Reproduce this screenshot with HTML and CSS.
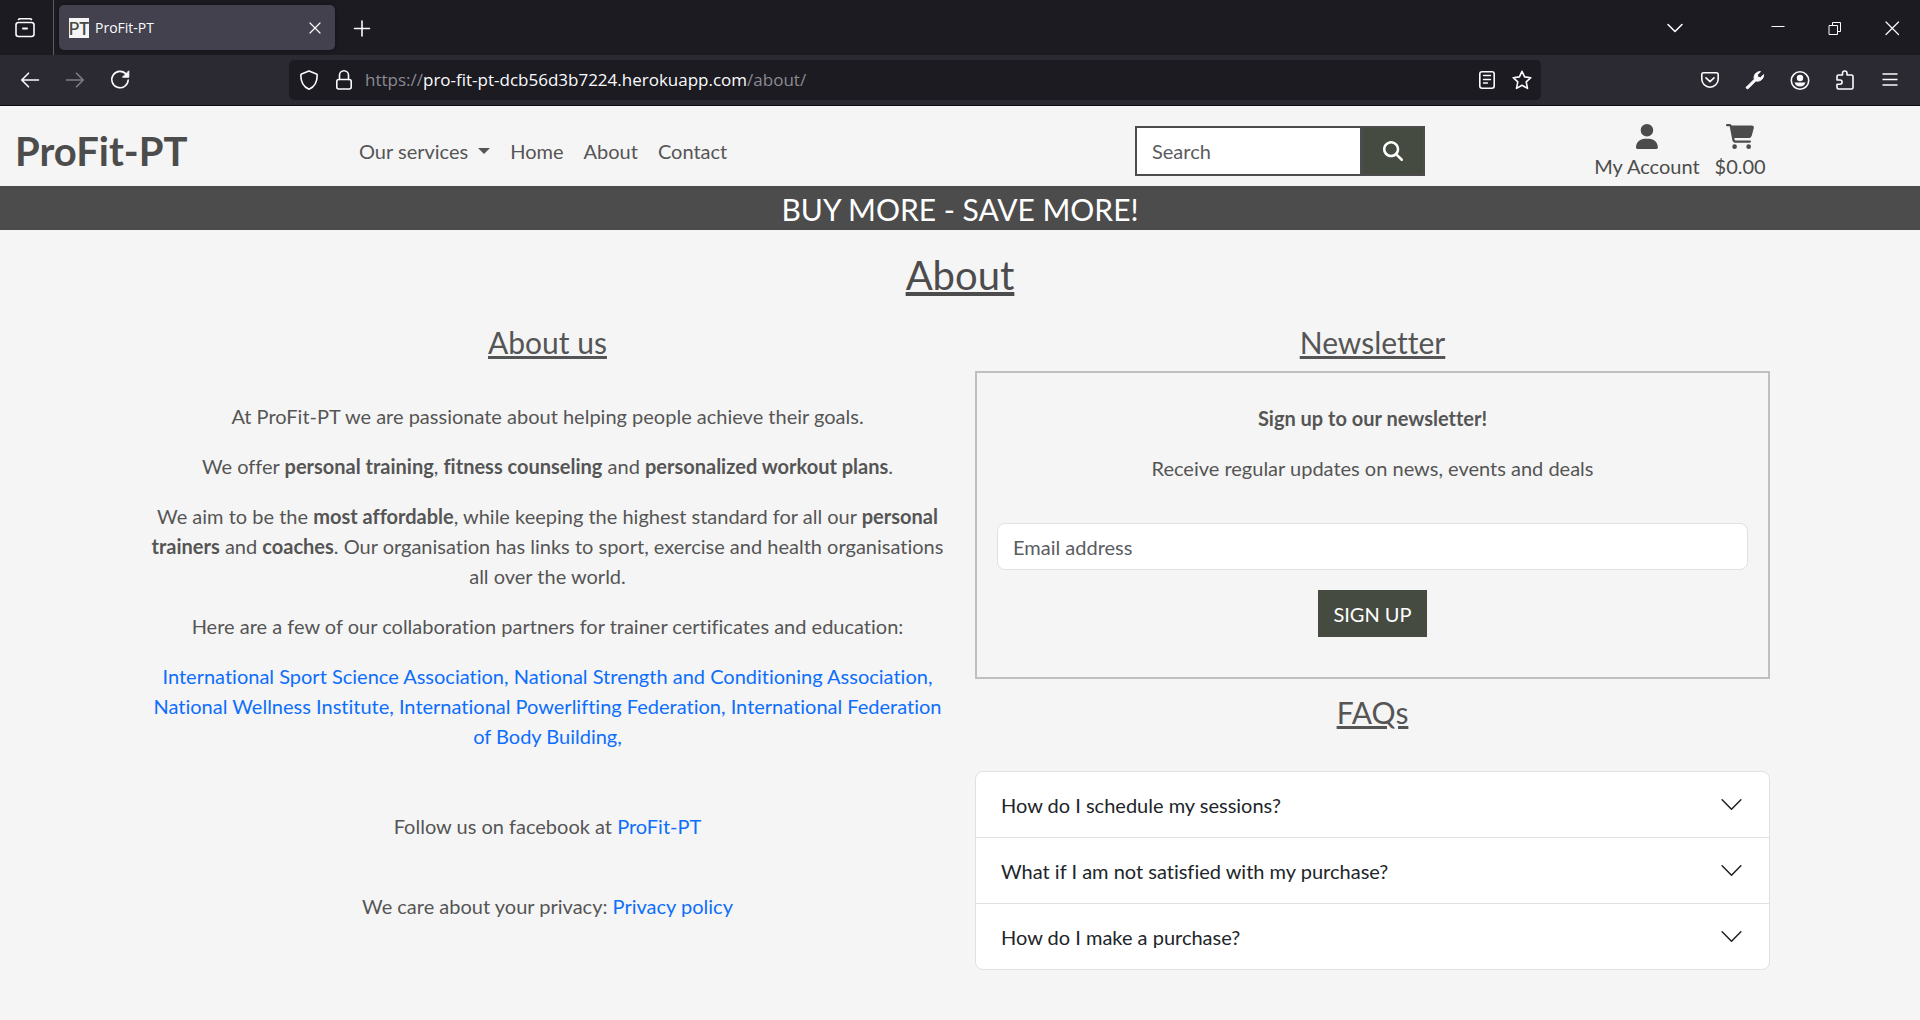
FILE: index.html
```html
<!DOCTYPE html>
<html lang="en">
<head>
<meta charset="utf-8">
<meta name="viewport" content="width=device-width, initial-scale=1">
<title>ProFit-PT</title>
<link rel="stylesheet" href="styles.css">
</head>
<body>
<div class="browser">
  <div class="tabs">
    <button class="view-button" type="button" aria-label="Firefox View">
      <svg class="icon" viewBox="0 0 20 20"><path d="M3.500 1.500Q4 .8 5 .8h10q1 0 1.500.7"/><rect x="1" y="4.500" width="18" height="14" rx="2.500"/><path d="M8 10.500h4" stroke-width="2"/></svg>
    </button>
    <div class="tab">
      <span class="favicon">PT</span>
      <span class="tab-title">ProFit-PT</span>
      <button class="tab-close" type="button" aria-label="Close tab">
        <svg class="icon thin" viewBox="0 0 20 20"><path d="M5 5l10 10M15 5L5 15"/></svg>
      </button>
    </div>
    <button class="tool" type="button" aria-label="New tab">
      <svg class="icon" viewBox="0 0 20 20"><path d="M10 3v15M2.500 10.500h15"/></svg>
    </button>
    <button class="tool list-tabs" type="button" aria-label="List all tabs">
      <svg class="icon" viewBox="0 0 20 20"><path d="M3 6.500l7 7 7-7"/></svg>
    </button>
    <button class="window-button" type="button" aria-label="Minimize">
      <svg class="icon crisp" viewBox="0 0 20 20"><path d="M4 8.500h12"/></svg>
    </button>
    <button class="window-button" type="button" aria-label="Restore">
      <svg class="icon crisp" viewBox="0 0 20 20"><path d="M4.500 7.500h8v9h-8zM7.500 7.500v-3h8v9h-3"/></svg>
    </button>
    <button class="window-button" type="button" aria-label="Close window">
      <svg class="icon thin" viewBox="0 0 20 20"><path d="M4 4l12.500 12.500M16.500 4L4 16.500"/></svg>
    </button>
  </div>
  <div class="toolbar">
    <button class="tool" type="button" aria-label="Back">
      <svg class="icon" viewBox="0 0 20 20"><path d="M18.500 10H2M8.500 3.200L1.800 10l6.700 6.800"/></svg>
    </button>
    <button class="tool" type="button" aria-label="Forward" disabled>
      <svg class="icon" viewBox="0 0 20 20"><path d="M1.500 10H18M11.500 3.200l6.700 6.800-6.700 6.800"/></svg>
    </button>
    <button class="tool" type="button" aria-label="Reload">
      <svg class="icon" viewBox="0 0 20 20"><path d="M16.200 4.200A8.200 8.200 0 1 0 18.200 10"/><path class="solid" d="M18.800 1.200v6h-6z" stroke-width="1"/></svg>
    </button>
    <div class="url-bar">
      <button class="url-tool" type="button" aria-label="Tracking protection">
        <svg class="icon" viewBox="0 0 20 20"><path d="M10 .9l7.500 3Q18.200 4.200 18.200 5C18.200 12 15.500 17 10 19.200 4.500 17 1.800 12 1.800 5q0-.8.700-1.100z"/></svg>
      </button>
      <button class="url-tool" type="button" aria-label="Site information">
        <svg class="icon" viewBox="0 0 20 20"><rect x="2.800" y="9.500" width="14.400" height="9.500" rx="2"/><path d="M5.500 9.500V5.300a4.500 4.500 0 0 1 9 0v4.200"/></svg>
      </button>
      <div class="url"><span class="url-dim">https://</span>pro-fit-pt-dcb56d3b7224.herokuapp.com<span class="url-dim">/about/</span></div>
      <button class="url-tool" type="button" aria-label="Reader view">
        <svg class="icon" viewBox="0 0 20 20"><rect x="2.800" y="1.800" width="14.400" height="16.400" rx="2.200"/><path d="M6.500 5.500h7M6.500 9.500h7M6.500 13h4" stroke-width="1.400"/></svg>
      </button>
      <button class="url-tool" type="button" aria-label="Bookmark this page">
        <svg class="icon" viewBox="0 0 20 20"><path d="M10 1.300l2.600 5.600 6.200.8-4.600 4.200 1.300 6.500-5.500-3.200-5.500 3.200 1.300-6.500L1.200 7.700l6.200-.8z"/></svg>
      </button>
    </div>
    <button class="tool" type="button" aria-label="Save to Pocket">
      <svg class="icon" viewBox="0 0 20 20"><path d="M3.500 2.800h13q1.700 0 1.700 1.700V9a8.200 8.200 0 0 1-16.400 0V4.500q0-1.700 1.700-1.700z"/><path d="M6 7.800l4 3.800 4-3.800"/></svg>
    </button>
    <button class="tool" type="button" aria-label="Developer tools">
      <svg class="icon" viewBox="0 0 20 20"><path class="solid" stroke-width="1" d="M1.600 16.900l7.700-7.700C8.300 5.500 10.900 1.500 15.500 1.600l-3 3.100.4 2.600 2.600.4 3.100-3.100c.2 4.600-3.800 7.400-7.700 6.300l-7.700 7.600q-1 .6-1.600-.1-.6-.7 0-1.500z"/></svg>
    </button>
    <button class="tool" type="button" aria-label="Account">
      <svg class="icon" viewBox="0 0 20 20"><circle cx="10" cy="10.500" r="8.700"/><circle class="solid" cx="10" cy="8" r="3.200" stroke-width="0"/><path class="solid" stroke-width="0" d="M4.500 12.500h11q-1.200 4-5.500 4t-5.500-4z"/></svg>
    </button>
    <button class="tool" type="button" aria-label="Extensions">
      <svg class="icon" viewBox="0 0 20 20"><path d="M2 8.200V6.500Q2 5 3.500 5h4V3.200a2.200 2.200 0 0 1 4.500 0V5h4.500Q18 5 18 6.500v11q0 1.500-1.500 1.500h-13Q2 19 2 17.500v-3.300h3a2 2 0 0 0 0-4.200H2z"/></svg>
    </button>
    <button class="tool" type="button" aria-label="Menu">
      <svg class="icon" viewBox="0 0 20 20"><path d="M2.500 4h15M2.500 9.500h15M2.500 15h15" stroke-linecap="butt"/></svg>
    </button>
  </div>
</div>

<header class="site-header">
  <a class="brand" href="#">ProFit-PT</a>
  <nav class="nav" aria-label="Main">
    <button class="nav-link dropdown" type="button">Our services</button>
    <a class="nav-link" href="#">Home</a>
    <a class="nav-link" href="#">About</a>
    <a class="nav-link" href="#">Contact</a>
  </nav>
  <form class="search">
    <input class="search-input" type="text" placeholder="Search" aria-label="Search">
    <button class="search-button" type="button" aria-label="Submit search">
      <svg class="search-icon" viewBox="0 0 512 512"><path d="M416 208c0 45.900-14.900 88.300-40 122.700L502.600 457.400c12.500 12.500 12.500 32.800 0 45.300s-32.800 12.500-45.300 0L330.700 376c-34.400 25.200-76.800 40-122.700 40C93.100 416 0 322.900 0 208S93.100 0 208 0S416 93.100 416 208zM208 352a144 144 0 1 0 0-288 144 144 0 1 0 0 288z"/></svg>
    </button>
  </form>
  <div class="user-links">
    <a class="user-link" href="#">
      <svg class="user-icon" viewBox="0 0 448 512"><path d="M224 256A128 128 0 1 0 224 0a128 128 0 1 0 0 256zm-45.700 48C79.800 304 0 383.800 0 482.300C0 498.700 13.300 512 29.700 512H418.300c16.400 0 29.700-13.300 29.700-29.700C448 383.800 368.200 304 269.700 304H178.300z"/></svg>
      <span>My Account</span>
    </a>
    <a class="user-link" href="#">
      <svg class="user-icon" viewBox="0 0 576 512"><path d="M0 24C0 10.700 10.700 0 24 0H69.500c22 0 41.500 12.800 50.600 32h411c26.300 0 45.500 25 38.600 50.400l-41 152.300c-8.500 31.400-37 53.300-69.500 53.300H170.700l5.400 28.500c2.200 11.300 12.100 19.500 23.600 19.500H488c13.300 0 24 10.700 24 24s-10.700 24-24 24H199.700c-34.600 0-64.300-24.600-70.700-58.500L77.400 54.500c-.7-3.800-4-6.500-7.900-6.500H24C10.700 48 0 37.300 0 24zM128 464a48 48 0 1 1 96 0 48 48 0 1 1 -96 0zm336-48a48 48 0 1 1 0 96 48 48 0 1 1 0-96z"/></svg>
      <span>$0.00</span>
    </a>
  </div>
</header>

<div class="banner">BUY MORE - SAVE MORE!</div>

<main class="container">
  <h1 class="page-title">About</h1>
  <div class="columns">
    <section class="about">
      <h2 class="section-title">About us</h2>
      <div class="about-text">
        <p>At ProFit-PT we are passionate about helping people achieve their goals.</p>
        <p>We offer <strong>personal training</strong>, <strong>fitness counseling</strong> and <strong>personalized workout plans</strong>.</p>
        <p>We aim to be the <strong>most affordable</strong>, while keeping the highest standard for all our <strong>personal trainers</strong> and <strong>coaches</strong>. Our organisation has links to sport, exercise and health organisations all over the world.</p>
        <p>Here are a few of our collaboration partners for trainer certificates and education:</p>
        <p><a href="#">International Sport Science Association,</a> <a href="#">National Strength and Conditioning Association,</a> <a href="#">National Wellness Institute,</a> <a href="#">International Powerlifting Federation,</a> <a href="#">International Federation of Body Building,</a></p>
      </div>
      <p class="follow">Follow us on facebook at <a href="#">ProFit-PT</a></p>
      <p class="privacy">We care about your privacy: <a href="#">Privacy policy</a></p>
    </section>
    <section class="side">
      <h2 class="section-title">Newsletter</h2>
      <form class="newsletter">
        <p><strong>Sign up to our newsletter!</strong></p>
        <p>Receive regular updates on news, events and deals</p>
        <input class="email" type="email" placeholder="Email address" aria-label="Email address">
        <button class="sign-up" type="button">SIGN UP</button>
      </form>
      <h2 class="section-title faq-title">FAQs</h2>
      <div class="accordion">
        <button class="question" type="button">How do I schedule my sessions?
          <svg class="chevron" viewBox="0 0 16 16"><path d="M2 5l6 6 6-6"/></svg>
        </button>
        <button class="question" type="button">What if I am not satisfied with my purchase?
          <svg class="chevron" viewBox="0 0 16 16"><path d="M2 5l6 6 6-6"/></svg>
        </button>
        <button class="question" type="button">How do I make a purchase?
          <svg class="chevron" viewBox="0 0 16 16"><path d="M2 5l6 6 6-6"/></svg>
        </button>
      </div>
    </section>
  </div>
</main>
</body>
</html>
```
FILE: styles.css
```css
*,
*::before,
*::after {
  box-sizing: border-box;
}

body {
  margin: 0;
  background: #f5f5f5;
  color: #555;
  font-family: Lato, sans-serif;
  font-size: 20px;
  font-variant-ligatures: none;
  line-height: 30px;
}

button,
input {
  margin: 0;
  font: inherit;
}

button {
  padding: 0;
  border: 0;
  background: none;
  color: inherit;
  cursor: pointer;
}

a {
  color: #0d6efd;
  text-decoration: none;
}

p {
  margin: 0 0 20px;
}

/* Browser window */

.browser {
  background: #2b2a33;
  border-bottom: 1px solid #0c0c0d;
  color: #fbfbfe;
  font-family: "Open Sans", "Noto Sans", sans-serif;
}

.icon {
  display: block;
  width: 20px;
  height: 20px;
  fill: none;
  stroke: currentColor;
  stroke-width: 1.6;
  stroke-linecap: round;
  stroke-linejoin: round;
}

.icon.thin,
.icon.crisp {
  stroke-width: 1.2;
}

.icon.crisp {
  stroke-width: 1;
  stroke-linecap: square;
  stroke-linejoin: miter;
}

.solid {
  fill: currentColor;
}

.tabs {
  display: flex;
  align-items: center;
  height: 55px;
  background: #1c1b22;
}

.view-button {
  display: flex;
  align-items: center;
  align-self: stretch;
  padding: 0 18px 0 15px;
  border-right: 1px solid #5b5b66;
}

.tab {
  display: flex;
  align-items: center;
  width: 276px;
  height: 45px;
  margin: 0 4px 0 5px;
  padding: 0 10px;
  border-radius: 5px;
  background: #42414d;
  box-shadow: 0 0 4px rgba(0, 0, 0, 0.4);
}

.favicon {
  display: flex;
  align-items: center;
  justify-content: center;
  width: 20px;
  height: 20px;
  background: #f5f5f5;
  color: #454b40;
  font: 500 17px/20px "Noto Sans CJK SC", sans-serif;
}

.tab-title {
  flex: 1;
  margin-left: 6px;
  font-size: 14px;
}

.tool {
  display: flex;
  align-items: center;
  justify-content: center;
  width: 45px;
  height: 40px;
}

.tool:disabled {
  opacity: 0.4;
}

.list-tabs {
  margin: 0 52px 0 auto;
}

.window-button {
  display: flex;
  align-items: center;
  justify-content: center;
  width: 57px;
  height: 55px;
}

.toolbar {
  display: flex;
  align-items: center;
  height: 50px;
  padding: 0 8px 0 7px;
}

.url-bar {
  display: flex;
  flex: 1;
  align-items: center;
  height: 40px;
  margin: 0 146px 0 147px;
  padding: 0 2px;
  border-radius: 5px;
  background: #1c1b22;
}

.url-tool {
  display: flex;
  align-items: center;
  justify-content: center;
  width: 35px;
  height: 35px;
}

.url {
  flex: 1;
  margin-left: 4px;
  font-size: 17px;
  white-space: nowrap;
}

.url-dim {
  color: #8b8a92;
}

/* Site header */

.site-header {
  display: grid;
  grid-template-columns: 2fr 5fr 2fr 3fr;
  align-items: center;
  min-height: 80px;
  padding-top: 10px;
}

.brand {
  padding-left: 15px;
  color: #4c4c4c;
  font-size: 40px;
  font-weight: 700;
  line-height: 48px;
}

.nav {
  display: flex;
  padding-left: 29px;
}

.nav-link {
  padding: 10px;
  color: #555;
}

.dropdown::after {
  content: "";
  display: inline-block;
  margin-left: 10px;
  vertical-align: 5px;
  border-top: 6px solid;
  border-right: 6px solid transparent;
  border-left: 6px solid transparent;
}

.search {
  display: flex;
  padding: 0 15px;
}

.search-input {
  flex: 1;
  width: 0;
  height: 50px;
  margin-right: -1px;
  padding: 0 15px;
  border: 2px solid #4c4c4c;
  border-radius: 0;
  background: #fff;
}

::placeholder {
  color: #595c5f;
  opacity: 1;
}

.search-button {
  display: flex;
  align-items: center;
  height: 50px;
  padding: 0 20px;
  border: 2px solid #4c4c4c;
  background: #454b40;
  color: #fff;
}

.search-icon {
  width: 20px;
  height: 20px;
  fill: currentColor;
}

.user-links {
  display: flex;
  justify-content: center;
  gap: 15px;
}

.user-link {
  display: flex;
  flex-direction: column;
  align-items: center;
  color: #4c4c4c;
}

.user-icon {
  height: 25px;
  margin: 3px 0 2px;
  fill: currentColor;
}

.banner {
  padding: 5px 0 3px;
  background: #4c4c4c;
  color: #fff;
  font-size: 30px;
  line-height: 36px;
  text-align: center;
}

/* About page */

.container {
  max-width: 1650px;
  margin: 0 auto;
  padding: 21px 15px 50px;
  text-align: center;
}

.page-title,
.section-title {
  font-weight: 400;
  text-decoration: underline;
}

.page-title {
  margin: 0 0 25px;
  color: #4c4c4c;
  font-size: 40px;
  line-height: 48px;
}

.section-title {
  margin: 0 0 11px;
  font-size: 30px;
  line-height: 36px;
}

.columns {
  display: grid;
  grid-template-columns: 1fr 1fr;
  gap: 30px;
}

.about-text {
  padding-top: 30px;
}

.follow {
  margin: 60px 0 50px;
}

.newsletter {
  display: flex;
  flex-direction: column;
  align-items: center;
  padding: 30px 20px 40px;
  border: 2px solid #bfbfbf;
}

.email {
  width: 100%;
  height: 47px;
  margin: 20px 0;
  padding: 0 15px;
  border: 1px solid #dee2e6;
  border-radius: 8px;
  background: #fff;
}

.sign-up {
  height: 47px;
  padding: 0 15px;
  background: #454b40;
  color: #fff;
}

.faq-title {
  margin: 15px 0 41px;
}

.accordion {
  overflow: hidden;
  border: 1px solid #dee2e6;
  border-radius: 8px;
  background: #fff;
}

.question {
  display: flex;
  align-items: center;
  justify-content: space-between;
  width: 100%;
  height: 65px;
  padding: 0 25px;
  color: #212529;
}

.question + .question {
  height: 66px;
  border-top: 1px solid #dee2e6;
}

.chevron {
  width: 25px;
  height: 25px;
  fill: none;
  stroke: currentColor;
  stroke-linecap: round;
  stroke-linejoin: round;
}
```
